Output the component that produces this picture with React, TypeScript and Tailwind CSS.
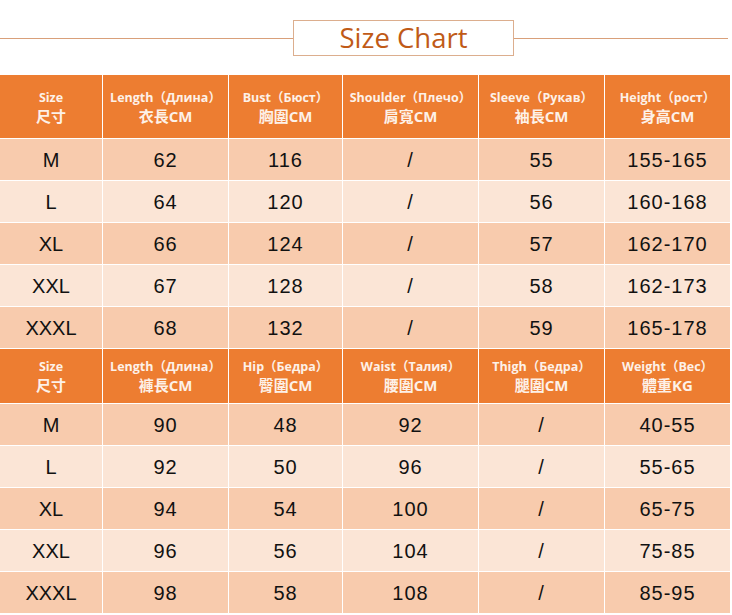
const top = {
  head: [
    ["Size", "尺寸"],
    ["Length（Длина）", "衣長CM"],
    ["Bust（Бюст）", "胸圍CM"],
    ["Shoulder（Плечо）", "肩寬CM"],
    ["Sleeve（Рукав）", "袖長CM"],
    ["Height（рост）", "身高CM"],
  ],
  rows: [
    ["M", "62", "116", "/", "55", "155-165"],
    ["L", "64", "120", "/", "56", "160-168"],
    ["XL", "66", "124", "/", "57", "162-170"],
    ["XXL", "67", "128", "/", "58", "162-173"],
    ["XXXL", "68", "132", "/", "59", "165-178"],
  ],
};

const bottom = {
  head: [
    ["Size", "尺寸"],
    ["Length（Длина）", "褲長CM"],
    ["Hip（Бедра）", "臀圍CM"],
    ["Waist（Талия）", "腰圍CM"],
    ["Thigh（Бедра）", "腿圍CM"],
    ["Weight（Вес）", "體重KG"],
  ],
  rows: [
    ["M", "90", "48", "92", "/", "40-55"],
    ["L", "92", "50", "96", "/", "55-65"],
    ["XL", "94", "54", "100", "/", "65-75"],
    ["XXL", "96", "56", "104", "/", "75-85"],
    ["XXXL", "98", "58", "108", "/", "85-95"],
  ],
};

const cjk = { fontFamily: '"Open Sans", "Noto Sans CJK TC", sans-serif' };
const num = { fontFamily: '"Liberation Sans", Arial, sans-serif' };

function Header({ cells, tall }: { cells: string[][]; tall?: boolean }) {
  return (
    <>
      {cells.map(([en, zh], i) => (
        <div
          key={i}
          className={`bg-[#ED7D31] text-[#fdf1e8] flex flex-col items-center justify-center ${tall ? "h-[63px]" : "h-[54px]"}`}
          style={cjk}
        >
          <span className="text-[12.5px] leading-[19px] font-bold whitespace-nowrap">{en}</span>
          <span className="text-[15px] leading-[19px] font-bold">{zh}</span>
        </div>
      ))}
    </>
  );
}

function Rows({ rows }: { rows: string[][] }) {
  return (
    <>
      {rows.map((r, ri) =>
        r.map((c, ci) => (
          <div
            key={`${ri}-${ci}`}
            className={`h-[41px] flex items-center justify-center text-[20px] text-[#111] ${ci === 0 ? "tracking-normal" : "tracking-[1px]"} ${ri % 2 === 0 ? "bg-[#F8CBAD]" : "bg-[#FBE5D6]"}`}
            style={num}
          >
            {c}
          </div>
        ))
      )}
    </>
  );
}

export default function App() {
  return (
    <div className="w-[732px] h-[615px] bg-white overflow-hidden">
      <div className="h-[75px] pt-[20px]">
        <div className="flex items-center h-[36px]">
          <div className="w-[293px] h-px bg-[#d9a07a]" />
          <div
            className="w-[221px] h-[36px] border border-[#dcae8e] flex items-center justify-center text-[27.5px] text-[#C05A17]"
            style={{ fontFamily: '"Open Sans", sans-serif' }}
          >
            Size Chart
          </div>
          <div className="w-[214px] h-px bg-[#d9a07a]" />
        </div>
      </div>
      <div className="w-[730px] grid grid-cols-[102px_125px_113px_135px_125px_125px] gap-px bg-white">
        <Header cells={top.head} tall />
        <Rows rows={top.rows} />
        <Header cells={bottom.head} />
        <Rows rows={bottom.rows} />
      </div>
    </div>
  );
}
